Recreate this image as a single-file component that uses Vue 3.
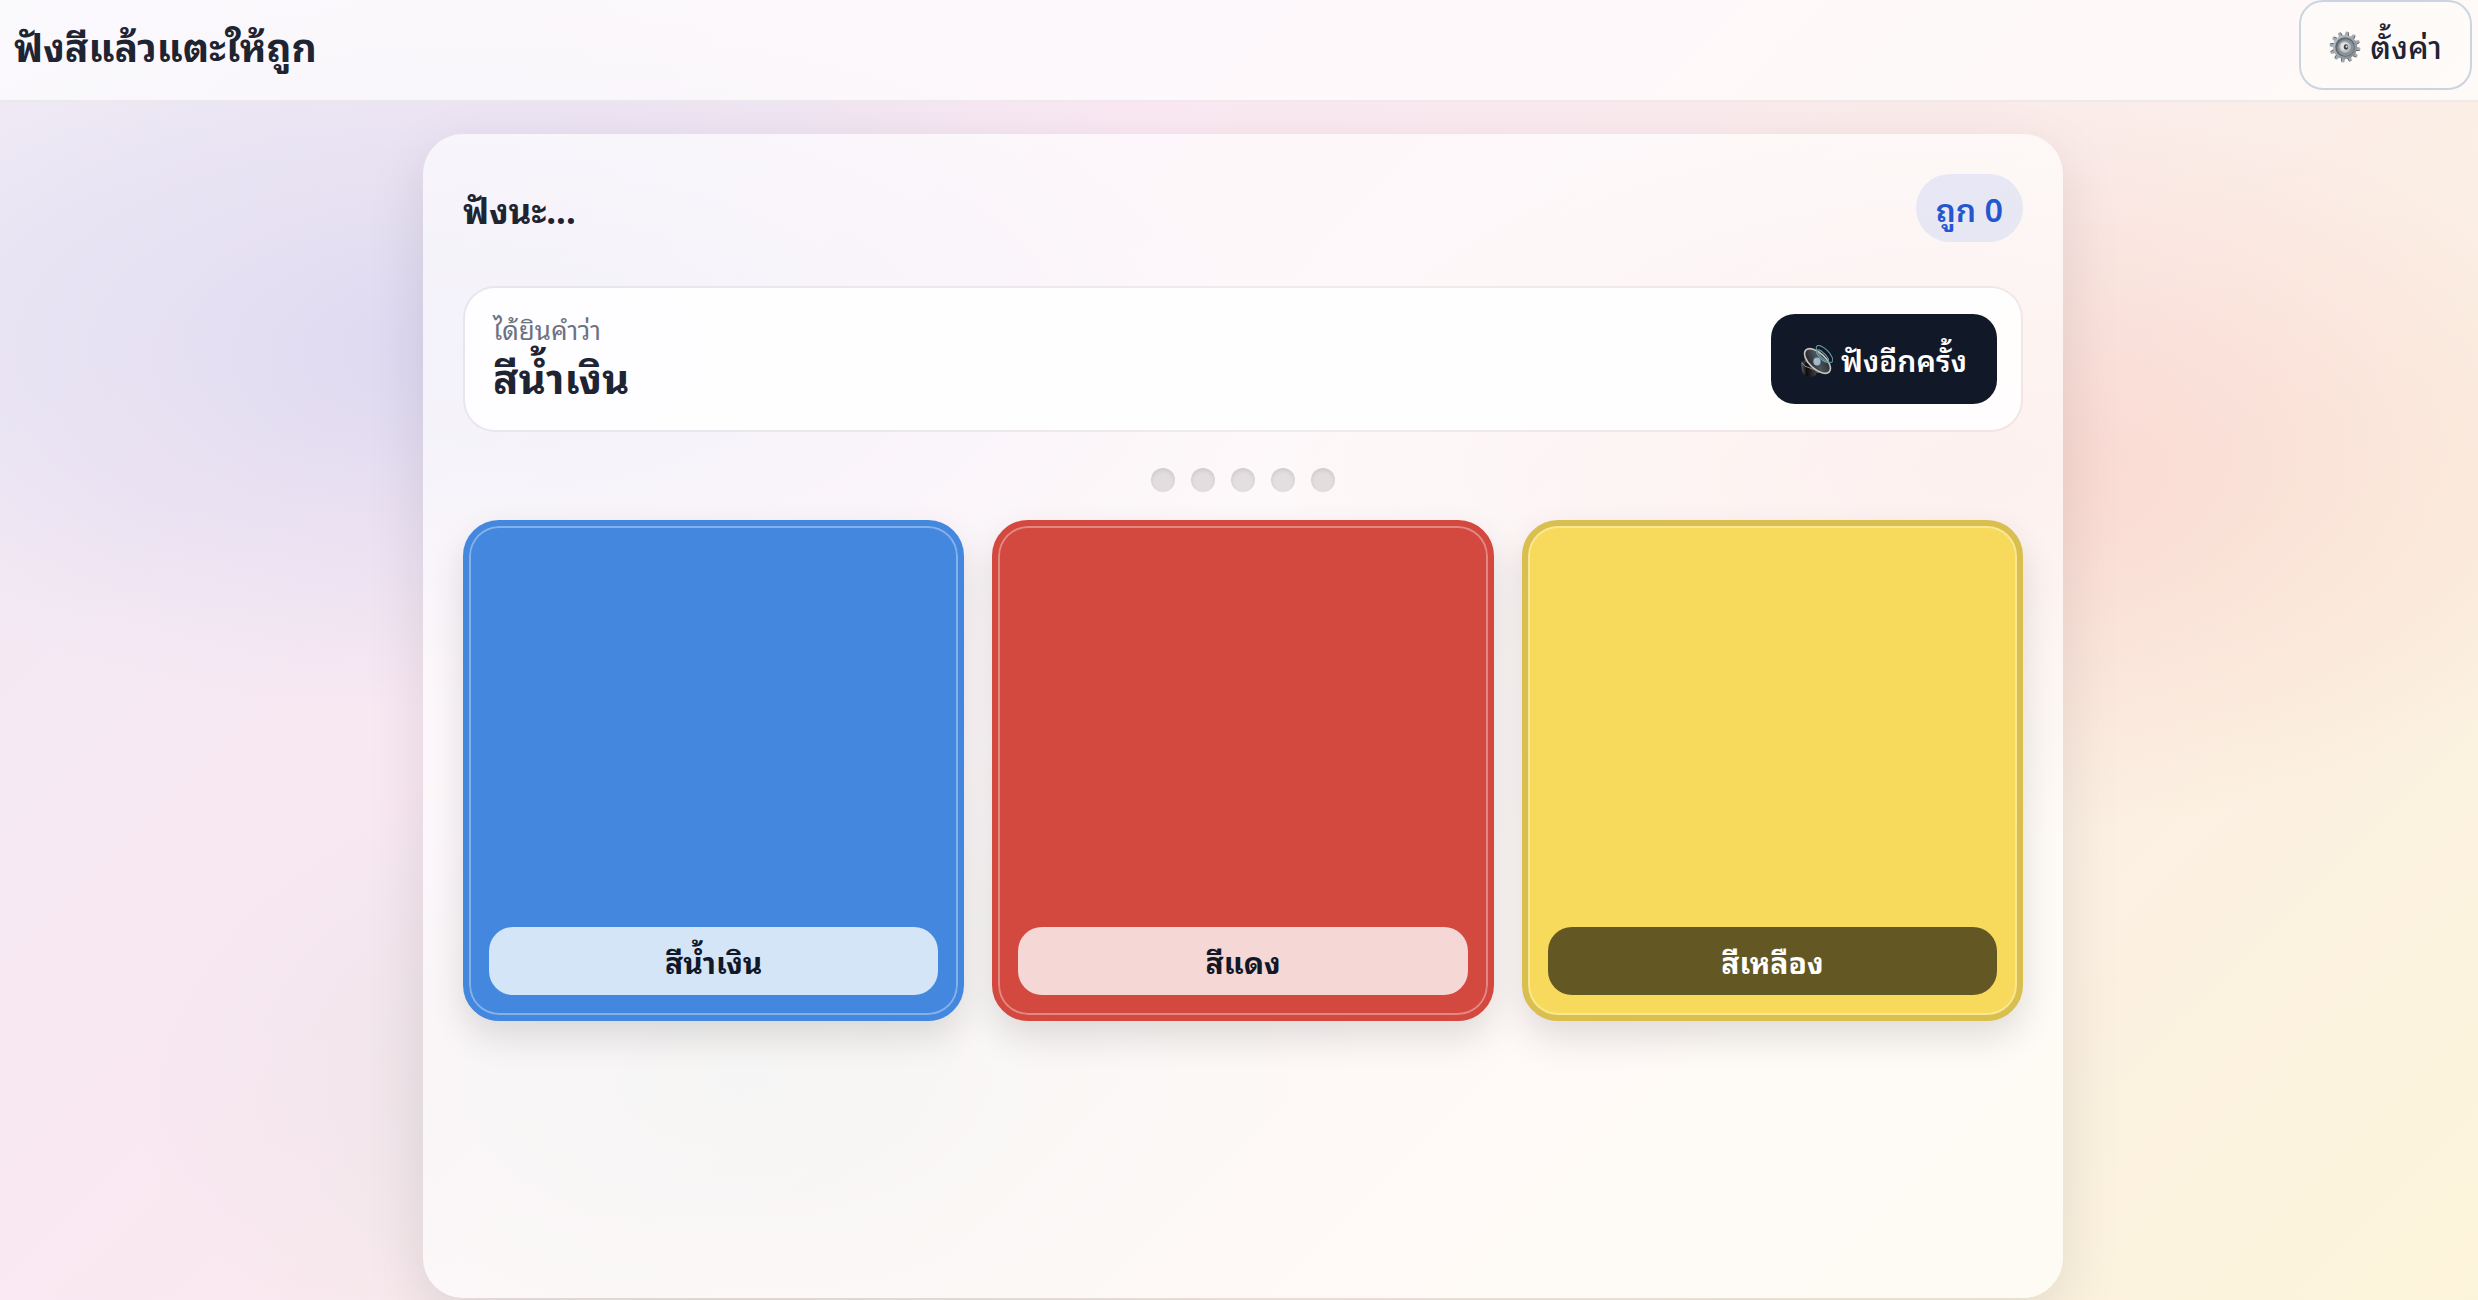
<script setup>
import { ref } from 'vue'

const target = 'สีน้ำเงิน'
const correct = ref(0)
const tiles = [
  { name: 'สีน้ำเงิน', kind: 'blue' },
  { name: 'สีแดง', kind: 'red' },
  { name: 'สีเหลือง', kind: 'yellow' },
]
const teeth = Array.from({ length: 12 }, (_, i) => i * 30 + 8)

function choose(tile) {
  if (tile.name === target) correct.value += 1
}
</script>

<template>
  <div class="page">
    <header class="topbar">
      <h1>ฟังสีแล้วแตะให้ถูก</h1>
      <button class="settings" type="button">
        <svg class="icon" viewBox="0 0 32 32" aria-hidden="true">
          <defs>
            <linearGradient id="steel" x1="0" y1="0" x2="1" y2="1">
              <stop offset="0" stop-color="#c3c8ce" />
              <stop offset="1" stop-color="#7b828a" />
            </linearGradient>
          </defs>
          <g v-for="a in teeth" :key="a" :transform="`rotate(${a} 16 16)`">
            <path d="M14 5 L14.6 .8 Q16 0 17.6 .8 L18.4 5Z" fill="#a3a9b0" />
            <path d="M17.4 .8 L18.4 5 L17.5 5 L16.9 1Z" fill="#544d47" />
          </g>
          <circle cx="16" cy="16" r="12" fill="url(#steel)" />
          <circle cx="16" cy="16" r="9.8" fill="#62696f" />
          <circle cx="16.6" cy="16.6" r="8.4" fill="#8b9299" />
          <circle cx="16" cy="16" r="5.8" fill="#b9c0c6" />
          <circle cx="15.5" cy="15.5" r="4" fill="#dde3e6" />
          <ellipse cx="17" cy="16" rx="2.2" ry="2.8" fill="#49423b" />
          <circle cx="17.6" cy="15.6" r="1.1" fill="#e8e6e0" />
        </svg>
        <span>ตั้งค่า</span>
      </button>
    </header>

    <main class="card">
      <div class="status">
        <h2>ฟังนะ...</h2>
        <span class="score">ถูก {{ correct }}</span>
      </div>

      <section class="prompt">
        <div class="heard">
          <p class="caption">ได้ยินคำว่า</p>
          <p class="word">{{ target }}</p>
        </div>
        <button class="replay" type="button">
          <svg class="icon" viewBox="0 0 32 32" aria-hidden="true">
            <defs>
              <linearGradient id="cone" x1="0" y1="1" x2="1" y2="0">
                <stop offset="0" stop-color="#101113" />
                <stop offset=".5" stop-color="#4c555c" />
                <stop offset="1" stop-color="#1d2226" />
              </linearGradient>
              <linearGradient id="magnet" x1="0" y1="0" x2="1" y2="0">
                <stop offset="0" stop-color="#66666a" />
                <stop offset=".35" stop-color="#0b0b0b" />
                <stop offset="1" stop-color="#454547" />
              </linearGradient>
            </defs>
            <path d="M3 7 L4 18 Q10 27 17 28 L27 28Z" fill="#5b5d60" />
            <path d="M0 18 Q1 15 5 17 L16 24 L15 30 Q12 32 8 32 Q2 30 1 26Z" fill="url(#magnet)" />
            <path d="M1 18 Q3 22 9 23 Q13 25 15 25" fill="none" stroke="#8b8b8e" />
            <ellipse cx="16.5" cy="16" rx="16" ry="8" transform="rotate(43 16.5 16)" fill="url(#cone)" stroke="#c9c5bd" stroke-width="1.6" />
            <ellipse cx="16" cy="16.5" rx="3.6" ry="4" fill="#a3b9ca" />
            <g fill="none" stroke="#6fa0aa">
              <ellipse cx="23.5" cy="9" rx="11" ry="4.4" transform="rotate(46 23.5 9)" />
              <ellipse cx="21.5" cy="11" rx="8" ry="3" transform="rotate(46 21.5 11)" />
            </g>
          </svg>
          <span>ฟังอีกครั้ง</span>
        </button>
      </section>

      <div class="dots">
        <span v-for="n in 5" :key="n" class="dot"></span>
      </div>

      <div class="tiles">
        <button
          v-for="tile in tiles"
          :key="tile.kind"
          type="button"
          class="tile"
          :class="tile.kind"
          @click="choose(tile)"
        >
          <span class="label">{{ tile.name }}</span>
        </button>
      </div>
    </main>
  </div>
</template>

<style>
body {
  margin: 0;
}
</style>

<style scoped>
.page {
  box-sizing: border-box;
  min-height: 100vh;
  display: flex;
  flex-direction: column;
  padding-bottom: 2px;
  color: #1f2433;
  font-family: "Sukhumvit Set", "Noto Sans Thai Looped", "Noto Looped Thai", Sarabun, Loma, Garuda, "Noto Sans", sans-serif;
  background:
    radial-gradient(ellipse 32% 28% at 20% 27%, rgba(110, 140, 230, 0.18), transparent),
    radial-gradient(ellipse 28% 28% at 80% 36%, rgba(240, 113, 113, 0.18), transparent),
    radial-gradient(ellipse 25% 27% at 30% 83%, rgba(80, 180, 140, 0.12), transparent),
    linear-gradient(135deg, #efebf5 0%, #fae8f2 35%, #fcf4da 100%);
}

h1,
h2,
p {
  margin: 0;
}

button {
  font-family: inherit;
  cursor: pointer;
}

.topbar {
  display: flex;
  justify-content: space-between;
  align-items: flex-start;
  height: 100px;
  padding: 0 6px 0 14px;
  border-bottom: 2px solid rgba(0, 0, 0, 0.06);
  background: rgba(255, 255, 255, 0.68);
}

h1 {
  font-size: 39px;
  line-height: 90px;
  font-weight: 700;
}

.settings,
.replay {
  display: flex;
  align-items: center;
  height: 90px;
  border-radius: 24px;
}

.settings {
  gap: 9px;
  padding: 0 28px;
  border: 2px solid #cbd5e1;
  background: rgba(255, 255, 255, 0.2);
  color: #1f2433;
  font-size: 32px;
  font-weight: 500;
  line-height: 44px;
}

.icon {
  width: 32px;
  height: 32px;
  margin-top: 4px;
}

.card {
  box-sizing: border-box;
  flex: 1;
  width: calc(100% - 80px);
  max-width: 1640px;
  margin: 32px auto 0;
  padding: 40px;
  border-radius: 40px;
  background: rgba(255, 255, 255, 0.65);
  box-shadow: 0 20px 60px rgba(0, 0, 0, 0.1);
  position: relative;
  left: 4px;
}

.status {
  display: flex;
  justify-content: space-between;
  align-items: center;
  height: 68px;
}

h2 {
  font-size: 35px;
  line-height: 68px;
  font-weight: 700;
}

.score {
  padding: 0 20px;
  border-radius: 34px;
  background: rgba(37, 99, 235, 0.1);
  color: #2456d0;
  font-size: 32px;
  line-height: 68px;
  font-weight: 600;
}

.prompt {
  display: flex;
  justify-content: space-between;
  align-items: center;
  margin-top: 44px;
  padding: 26px 24px 26px 28px;
  border: 2px solid rgba(0, 0, 0, 0.05);
  border-radius: 32px;
  background: rgba(255, 255, 255, 0.85);
  background-clip: padding-box;
}

.caption {
  color: #6b7280;
  font-size: 26px;
  line-height: 28px;
}

.word {
  padding-top: 4px;
  font-size: 42px;
  line-height: 58px;
  font-weight: 700;
}

.replay {
  gap: 8px;
  padding: 0 30px;
  border: 0;
  background: #111827;
  color: #fff;
  font-size: 30px;
  font-weight: 600;
  line-height: 44px;
}

.dots {
  display: flex;
  justify-content: center;
  gap: 16px;
  margin: 36px 0 28px;
}

.dot {
  width: 24px;
  height: 24px;
  border-radius: 50%;
  background: rgba(0, 0, 0, 0.1);
  box-shadow: inset 0 2px 4px rgba(0, 0, 0, 0.1);
}

.tiles {
  display: grid;
  grid-template-columns: repeat(3, 1fr);
  gap: 28px;
}

.tile {
  box-sizing: border-box;
  display: flex;
  align-items: flex-end;
  aspect-ratio: 1;
  padding: 20px;
  border: 6px solid transparent;
  border-radius: 36px;
  box-shadow:
    inset 0 0 0 2px rgba(255, 255, 255, 0.35),
    0 16px 36px rgba(0, 0, 0, 0.12);
}

.blue {
  border-color: #4387de;
  background: #4387de;
}

.red {
  border-color: #d3493f;
  background: #d3493f;
}

.yellow {
  border-color: #d9bf4f;
  background: #f7da5b;
}

.label {
  flex: 1;
  border-radius: 24px;
  font-size: 30px;
  line-height: 68px;
  font-weight: 700;
  text-align: center;
  color: #111827;
  background: rgba(255, 255, 255, 0.78);
}

.yellow .label {
  color: #fff;
  background: rgba(0, 0, 0, 0.6);
}
</style>
